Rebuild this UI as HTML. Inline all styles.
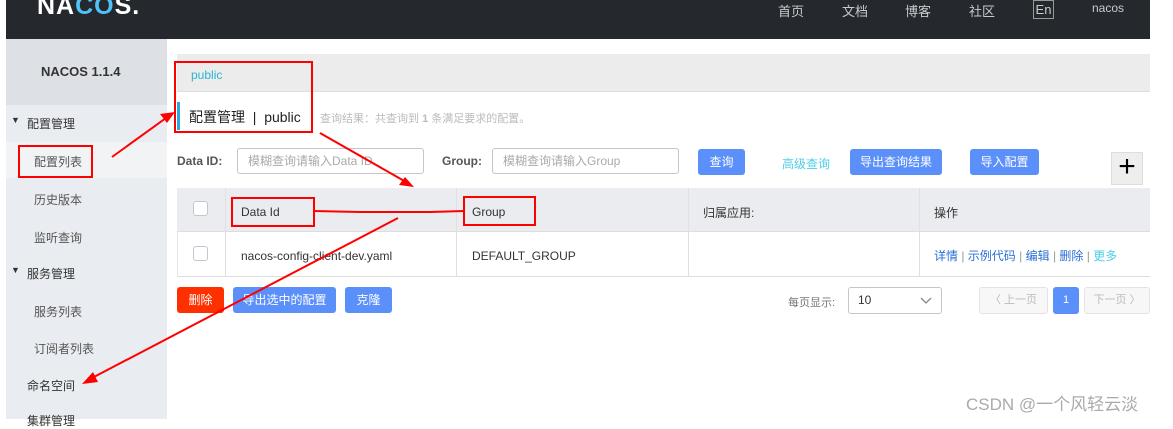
<!DOCTYPE html>
<html><head><meta charset="utf-8"><style>
*{margin:0;padding:0;box-sizing:border-box}
body{width:1173px;height:419px;overflow:hidden;background:#fff;font-family:"Liberation Sans","Noto Sans CJK SC",sans-serif;position:relative;font-size:12px;color:#333}
.a{position:absolute}
.hdr{left:6px;top:0;width:1144px;height:39px;background:#25292e}
.nav{color:#c8cacd;font-size:13px;top:1px}
.side{left:6px;top:39px;width:161px;height:380px;background:#e9ecf0}
.mi{font-size:12px;color:#333}
.sub{color:#555}
.btn{background:#5b8ff9;color:#fff;border-radius:3px;font-size:12px;text-align:center;line-height:26px;height:26px}
.inp{border:1px solid #c4c6cf;border-radius:3px;height:26px;color:#aaa;padding-left:10px;line-height:24px;font-size:12px}
.cb{width:15px;height:15px;border:1px solid #c4c6cf;border-radius:3px;background:#fff}
</style></head><body>
<div class="a hdr"></div>
<div class="a" style="left:37px;top:-8px;color:#fff;font-size:25px;font-weight:bold;letter-spacing:1px">NA<span style="color:#4fc3f7">CO</span>S.</div>
<div class="a nav" style="left:778px">首页</div>
<div class="a nav" style="left:842px">文档</div>
<div class="a nav" style="left:905px">博客</div>
<div class="a nav" style="left:969px">社区</div>
<div class="a nav" style="left:1033px;top:0;border:1px solid #999;height:19px;width:21px;text-align:center;line-height:17px">En</div>
<div class="a nav" style="left:1092px;font-size:12px">nacos</div>
<div class="a side"></div>
<div class="a" style="left:6px;top:39px;width:161px;height:66px;background:#dde0e5"></div>
<div class="a" style="left:6px;top:142px;width:161px;height:36px;background:#f2f3f5"></div>
<div class="a" style="left:41px;top:64px;font-weight:bold;font-size:13px;color:#333">NACOS 1.1.4</div>
<div class="a mi" style="left:11px;top:115px;font-size:9px">▼</div>
<div class="a mi" style="left:27px;top:115px">配置管理</div>
<div class="a mi sub" style="left:34px;top:153px">配置列表</div>
<div class="a mi sub" style="left:34px;top:191px">历史版本</div>
<div class="a mi sub" style="left:34px;top:229px">监听查询</div>
<div class="a mi" style="left:11px;top:265px;font-size:9px">▼</div>
<div class="a mi" style="left:27px;top:265px">服务管理</div>
<div class="a mi sub" style="left:34px;top:303px">服务列表</div>
<div class="a mi sub" style="left:34px;top:340px">订阅者列表</div>
<div class="a mi" style="left:27px;top:377px">命名空间</div>
<div class="a mi" style="left:27px;top:412px">集群管理</div>
<div class="a" style="left:177px;top:54px;width:973px;height:38px;background:#ececec;border-bottom:1px solid #ddd"></div>
<div class="a" style="left:191px;top:68px;color:#2ab3d6;font-size:12px">public</div>
<div class="a" style="left:177px;top:102px;width:3px;height:28px;background:#2ea7e0"></div>
<div class="a" style="left:189px;top:107px;font-size:14px;color:#222">配置管理 &nbsp;|&nbsp; public</div>
<div class="a" style="left:320px;top:110px;font-size:11px;color:#bbb">查询结果：共查询到 <b>1</b> 条满足要求的配置。</div>
<div class="a" style="left:177px;top:154px;font-weight:bold;color:#555">Data ID:</div>
<div class="a inp" style="left:237px;top:148px;width:187px">模糊查询请输入Data ID</div>
<div class="a" style="left:442px;top:154px;font-weight:bold;color:#555">Group:</div>
<div class="a inp" style="left:492px;top:148px;width:187px">模糊查询请输入Group</div>
<div class="a btn" style="left:698px;top:149px;width:47px">查询</div>
<div class="a" style="left:782px;top:155px;color:#4dcfe6">高级查询</div>
<div class="a btn" style="left:850px;top:149px;width:92px">导出查询结果</div>
<div class="a btn" style="left:970px;top:149px;width:69px">导入配置</div>
<div class="a" style="left:1111px;top:152px;width:32px;height:33px;background:#eee;border:1px solid #ddd;font-size:30px;line-height:28px;text-align:center;color:#000">+</div>
<div class="a" style="left:177px;top:188px;width:973px;height:44px;background:#ebecf0;border-bottom:1px solid #ddd"></div>
<div class="a" style="left:177px;top:232px;width:973px;height:45px;border-bottom:1px solid #ddd;border-left:1px solid #e6e6e6"></div>
<div class="a" style="left:225px;top:188px;width:1px;height:88px;background:#e0e0e0"></div>
<div class="a" style="left:456px;top:188px;width:1px;height:88px;background:#e0e0e0"></div>
<div class="a" style="left:688px;top:188px;width:1px;height:88px;background:#e0e0e0"></div>
<div class="a" style="left:919px;top:188px;width:1px;height:88px;background:#e0e0e0"></div>
<div class="a cb" style="left:193px;top:201px"></div>
<div class="a cb" style="left:193px;top:246px"></div>
<div class="a" style="left:241px;top:205px">Data Id</div>
<div class="a" style="left:472px;top:205px">Group</div>
<div class="a" style="left:703px;top:204px">归属应用:</div>
<div class="a" style="left:934px;top:204px">操作</div>
<div class="a" style="left:241px;top:249px">nacos-config-client-dev.yaml</div>
<div class="a" style="left:472px;top:249px">DEFAULT_GROUP</div>
<div class="a" style="left:934px;top:247px;color:#2a6fd6">详情 <span style="color:#999">|</span> 示例代码 <span style="color:#999">|</span> 编辑 <span style="color:#999">|</span> 删除 <span style="color:#999">|</span> <span style="color:#4dcfe6">更多</span></div>
<div class="a btn" style="left:177px;top:287px;width:47px;background:#ff3000">删除</div>
<div class="a btn" style="left:233px;top:287px;width:103px">导出选中的配置</div>
<div class="a btn" style="left:345px;top:287px;width:47px">克隆</div>
<div class="a" style="left:788px;top:294px;color:#777;font-size:11px">每页显示:</div>
<div class="a" style="left:848px;top:287px;width:94px;height:27px;border:1px solid #c4c6cf;border-radius:3px;padding-left:9px;line-height:25px">10<svg style="position:absolute;right:9px;top:9px" width="12" height="8"><polyline points="1,1 6,6 11,1" fill="none" stroke="#888" stroke-width="1.3"/></svg></div>
<div class="a" style="left:979px;top:287px;width:69px;height:27px;border:1px solid #e3e3e3;background:#f7f7f7;border-radius:3px;color:#bbb;text-align:center;line-height:25px;font-size:11px">〈 上一页</div>
<div class="a" style="left:1053px;top:287px;width:26px;height:27px;background:#5b8ff9;border-radius:3px;color:#fff;text-align:center;line-height:27px;font-size:11px">1</div>
<div class="a" style="left:1084px;top:287px;width:66px;height:27px;border:1px solid #e3e3e3;background:#f7f7f7;border-radius:3px;color:#bbb;text-align:center;line-height:25px;font-size:11px">下一页 〉</div>
<div class="a" style="left:966px;top:390px;color:#aaa;font-size:17px">CSDN @一个风轻云淡</div>
<svg class="a" style="left:0;top:0" width="1173" height="419">
<g fill="none" stroke="#ff0000" stroke-width="2">
<rect x="19" y="146" width="73" height="31"/>
<rect x="175" y="62" width="137" height="70"/>
<rect x="232" y="198" width="82" height="28"/>
<rect x="464" y="197" width="71" height="28"/>
<line x1="112" y1="157" x2="166" y2="118"/>
<line x1="320" y1="133" x2="406" y2="182"/>
<polyline points="314,211 360,212 430,212 464,211"/>
<line x1="398" y1="218" x2="92" y2="378"/>
</g>
<g fill="#ff0000">
<polygon points="175,112 160,114 167,123"/>
<polygon points="414,187 399,185 405,177"/>
<polygon points="82,384 93,372 98,382"/>
</g>
</svg>
</body></html>
